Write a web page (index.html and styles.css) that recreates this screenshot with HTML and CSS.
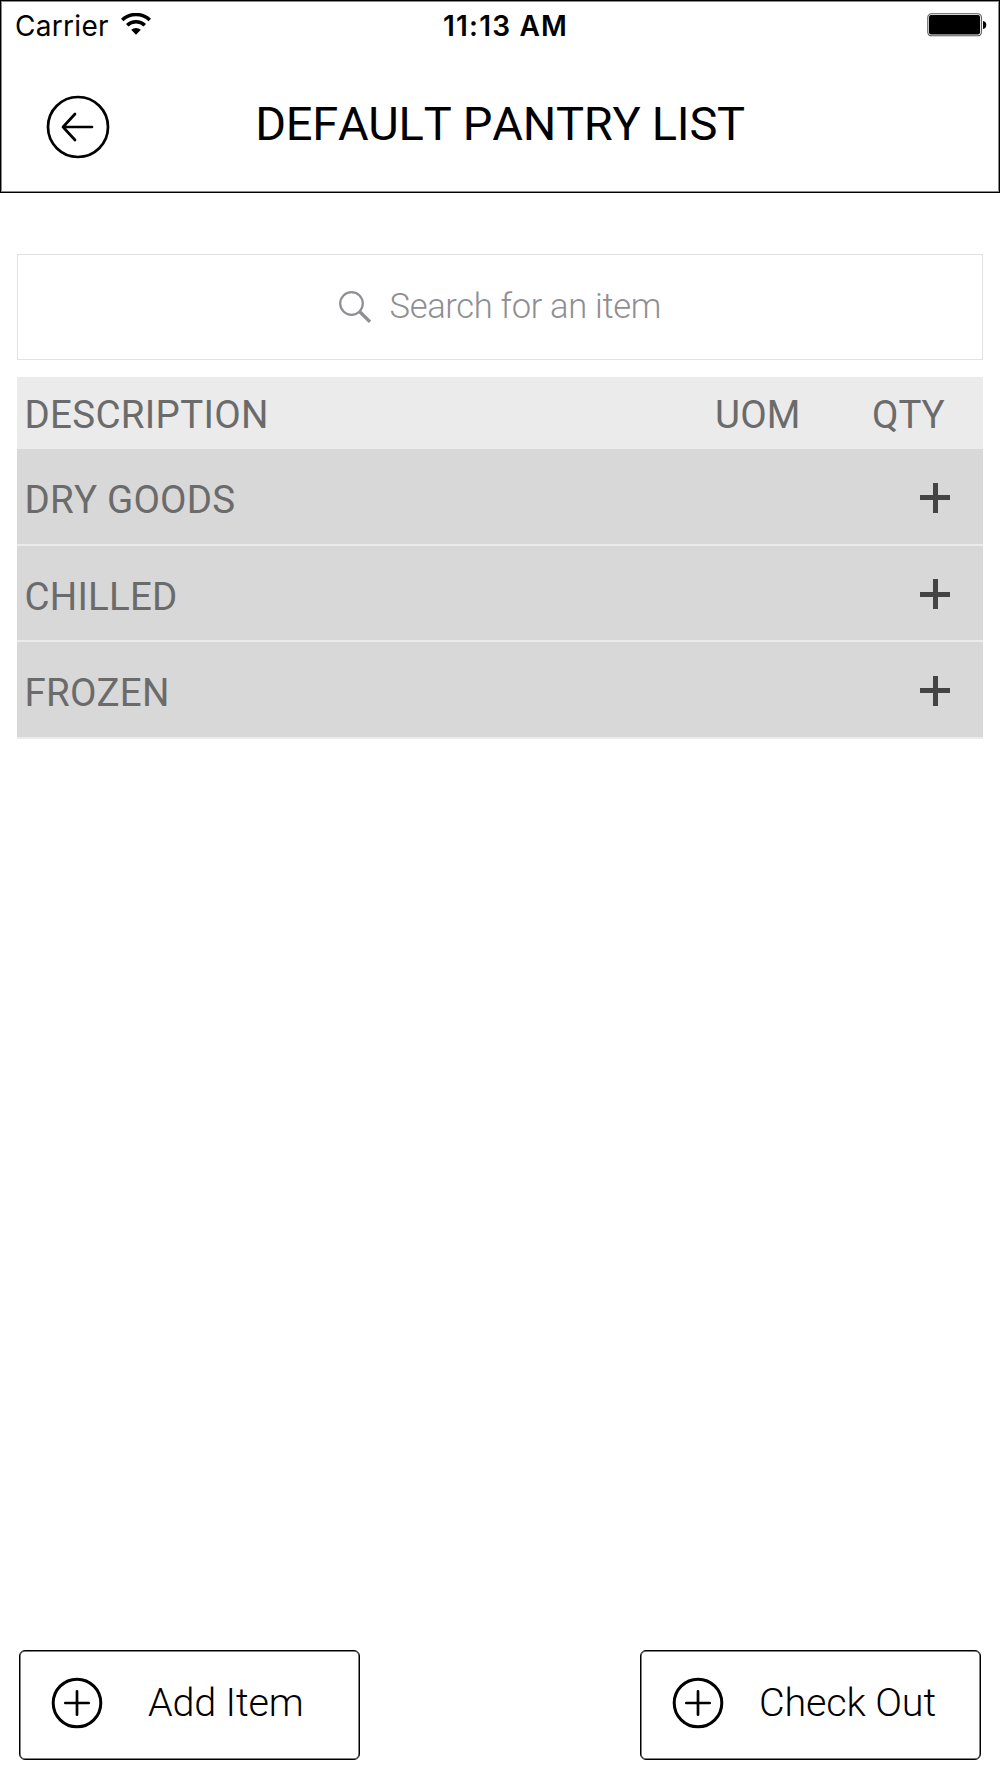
FILE: index.html
```
<!DOCTYPE html>
<html lang="en">
<head>
    <meta charset="UTF-8">
    <meta name="viewport" content="width=device-width, initial-scale=1.0">
    <title>Default Pantry List</title>
    <link rel="stylesheet" href="styles.css">
</head>
<body>
    <header class="header">
        <div class="status-bar">
            <div class="carrier">
                <span>Carrier</span>
                <svg class="wifi" width="30" height="22" viewBox="0 0 30 22">
                    <path d="M1.2 7 A20 20 0 0 1 28.8 7" fill="none" stroke="#000" stroke-width="3.5"/>
                    <path d="M6.2 12.3 A12.6 12.6 0 0 1 23.8 12.3" fill="none" stroke="#000" stroke-width="3.5"/>
                    <path d="M10.2 16.8 A7 7 0 0 1 19.8 16.8 L15 21.8 Z"/>
                </svg>
            </div>
            <div class="time">11:13 AM</div>
            <div class="battery">
                <svg width="60" height="24" viewBox="0 0 60 24">
                    <rect x="0.8" y="0.8" width="53.6" height="22" rx="3.6" fill="#fff" stroke="#555" stroke-width="1.1"/>
                    <rect x="2" y="2" width="51" height="19.4" rx="2"/>
                    <path d="M56 8 Q59.3 8.7 59.3 12 Q59.3 15.3 56 16 Z"/>
                </svg>
            </div>
        </div>
        <div class="nav-bar">
            <button class="back-button" aria-label="Back">
                <svg width="64" height="64" viewBox="0 0 64 64" fill="none" stroke="#000" stroke-width="2.7" stroke-linecap="round" stroke-linejoin="round">
                    <circle cx="32" cy="32" r="30"/>
                    <path d="M46 32 H17 M29 19 L17 32 L29 45"/>
                </svg>
            </button>
            <h1 class="title">DEFAULT PANTRY LIST</h1>
        </div>
    </header>

    <main class="content">
        <div class="search">
            <svg width="32" height="32" viewBox="0 0 32 32" fill="none" stroke="#8e8e93">
                <circle cx="12.5" cy="12.5" r="11.3" stroke-width="2.2"/>
                <path d="M20.5 20.5 L31 30.8" stroke-width="3.4"/>
            </svg>
            <span class="placeholder">Search for an item</span>
        </div>

        <div class="list">
            <div class="list-head">
                <span class="col-desc">DESCRIPTION</span>
                <span class="col-uom">UOM</span>
                <span class="col-qty">QTY</span>
            </div>
            <div class="list-row">
                <span class="row-name">DRY GOODS</span>
                <span class="plus"></span>
            </div>
            <div class="list-row">
                <span class="row-name">CHILLED</span>
                <span class="plus"></span>
            </div>
            <div class="list-row">
                <span class="row-name">FROZEN</span>
                <span class="plus"></span>
            </div>
        </div>
    </main>

    <footer class="footer">
        <button class="action">
            <svg width="52" height="52" viewBox="0 0 52 52" fill="none" stroke="#000" stroke-linecap="round">
                <circle cx="26" cy="26" r="23.8" stroke-width="3"/>
                <path d="M26 14.3 V37.7 M14.3 26 H37.7" stroke-width="2.7"/>
            </svg>
            <span class="action-text add">Add Item</span>
        </button>
        <button class="action">
            <svg width="52" height="52" viewBox="0 0 52 52" fill="none" stroke="#000" stroke-linecap="round">
                <circle cx="26" cy="26" r="23.8" stroke-width="3"/>
                <path d="M26 14.3 V37.7 M14.3 26 H37.7" stroke-width="2.7"/>
            </svg>
            <span class="action-text check">Check Out</span>
        </button>
    </footer>
</body>
</html>
```
FILE: styles.css
```
* {
    margin: 0;
    padding: 0;
    box-sizing: border-box;
}
body {
    display: flex;
    flex-direction: column;
    height: 1778px;
    background-color: #fff;
    font-family: Roboto, "Liberation Sans", sans-serif;
    color: #000;
}
svg {
    display: block;
    flex-shrink: 0;
}
button {
    background: none;
    border: none;
    font-family: inherit;
    color: inherit;
}
.header {
    height: 193px;
    border: 1px solid #000;
    box-shadow: inset 0 0 0 1px #888;
}
.status-bar {
    display: grid;
    grid-template-columns: 1fr auto 1fr;
    align-items: center;
    height: 49px;
    padding: 0 12px 0 14px;
    font-family: Inter, "Liberation Sans", sans-serif;
    font-size: 28px;
}
.carrier {
    display: flex;
    align-items: center;
    gap: 12px;
    letter-spacing: 0.3px;
}
.wifi {
    margin-bottom: 3px;
}
.time {
    margin-left: 9px;
    font-weight: 600;
    letter-spacing: 1.2px;
}
.battery {
    display: flex;
    justify-content: flex-end;
    margin-bottom: 2px;
}
.nav-bar {
    display: grid;
    grid-template-columns: 110px 1fr 110px;
    align-items: center;
    height: 148px;
}
.back-button {
    width: 64px;
    height: 64px;
    margin-left: 45px;
    margin-top: 5px;
}
.title {
    font-size: 47px;
    font-weight: 400;
    line-height: 56px;
    letter-spacing: -0.25px;
    font-kerning: none;
    text-align: center;
    white-space: nowrap;
}
.content {
    padding: 61px 17px 0;
}
.search {
    display: flex;
    align-items: center;
    justify-content: center;
    gap: 18.5px;
    height: 106px;
    border: 1px solid #e2e2e2;
    color: #8e8e93;
}
.placeholder {
    font-size: 34.5px;
    font-weight: 300;
    line-height: 40px;
    letter-spacing: -0.32px;
    padding-bottom: 2px;
}
.list {
    margin-top: 17px;
    font-size: 38.5px;
    line-height: 46px;
    letter-spacing: 0.2px;
    font-kerning: none;
    color: #6b6b6b;
}
.list-head {
    display: grid;
    grid-template-columns: 1fr 157px 111px;
    align-items: center;
    height: 72px;
    padding-left: 7.5px;
    padding-top: 3px;
    background-color: #ebebeb;
}
.col-desc {
    letter-spacing: 0.3px;
}
.col-qty {
    letter-spacing: 0;
}
.list-row {
    display: flex;
    align-items: center;
    justify-content: space-between;
    height: 96.6px;
    padding: 0 33px 0 7.5px;
    background-color: #d8d8d8;
    border-bottom: 2px solid #ebebeb;
}
.row-name {
    padding-top: 8px;
}
.plus {
    width: 30px;
    height: 30px;
    margin-top: 3px;
    background:
        linear-gradient(#444, #444) center / 30px 5px no-repeat,
        linear-gradient(#444, #444) center / 5px 30px no-repeat;
}
.footer {
    display: flex;
    justify-content: space-between;
    margin-top: auto;
    padding: 0 19px 18px;
}
.action {
    display: flex;
    align-items: center;
    width: 341px;
    height: 110px;
    padding-left: 31px;
    border: 1px solid #000;
    border-radius: 6px;
    box-shadow: inset 0 0 0 0.5px #000;
    font-size: 39.5px;
    font-weight: 300;
    text-align: left;
}
.action svg {
    margin-bottom: 4px;
}
.action-text {
    line-height: 46px;
    letter-spacing: -0.15px;
    padding-bottom: 5px;
    white-space: nowrap;
}
.add {
    margin-left: 45px;
}
.check {
    margin-left: 35px;
}
```
